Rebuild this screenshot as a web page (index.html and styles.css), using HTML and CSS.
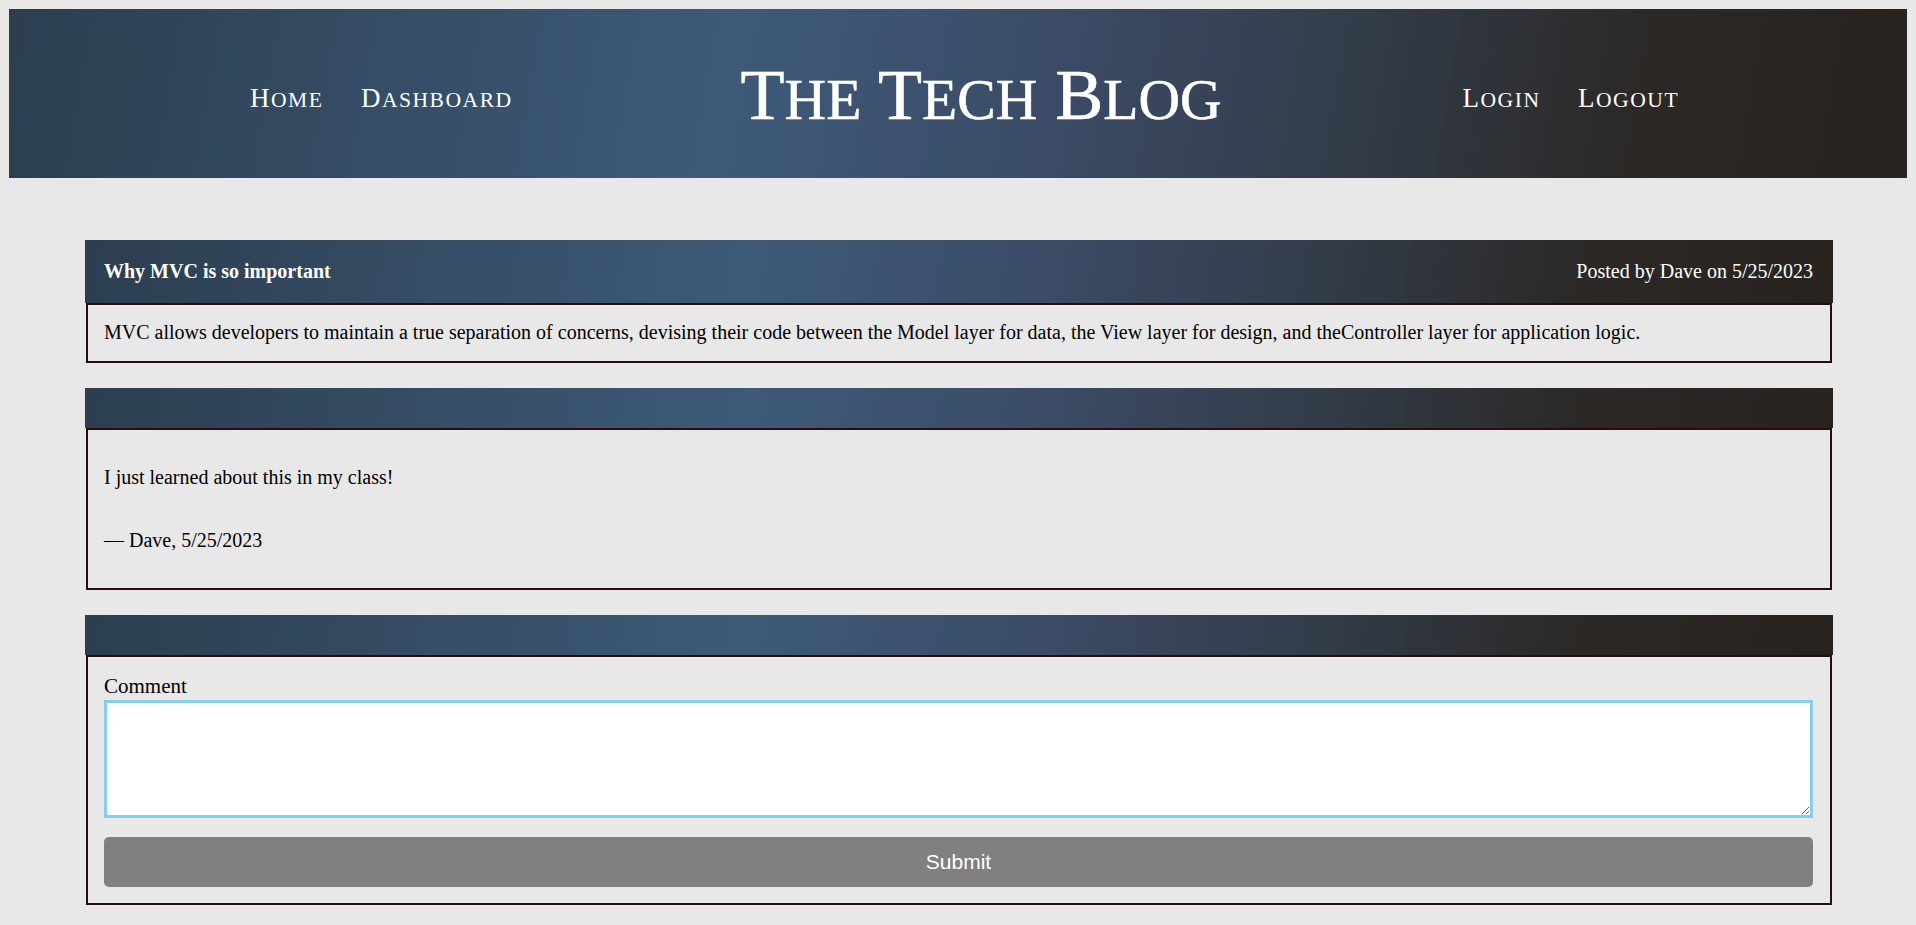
FILE: index.html
```html
<!DOCTYPE html>
<html lang="en">
<head>
<meta charset="utf-8">
<title>The Tech Blog</title>
<link rel="stylesheet" href="styles.css">
</head>
<body>
<header class="site-header">
  <nav class="nav nav-left">
    <a href="#" class="nav-link">H<span class="sc">ome</span></a>
    <a href="#" class="nav-link">D<span class="sc">ashboard</span></a>
  </nav>
  <h1 class="site-title">T<span class="sc">he</span> T<span class="sc">ech</span> B<span class="sc">log</span></h1>
  <nav class="nav nav-right">
    <a href="#" class="nav-link">L<span class="sc">ogin</span></a>
    <a href="#" class="nav-link">L<span class="sc">ogout</span></a>
  </nav>
</header>
<main class="content">
  <article class="card post">
    <div class="card-header post-header">
      <span class="post-title">Why MVC is so important</span>
      <span class="post-meta">Posted by Dave on 5/25/2023</span>
    </div>
    <div class="card-body post-body">
      <p>MVC allows developers to maintain a true separation of concerns, devising their code between the Model layer for data, the View layer for design, and theController layer for application logic.</p>
    </div>
  </article>
  <section class="card comment">
    <div class="card-header"></div>
    <div class="card-body comment-body">
      <p class="comment-text">I just learned about this in my class!</p>
      <p class="comment-meta">— Dave, 5/25/2023</p>
    </div>
  </section>
  <section class="card comment-form-card">
    <div class="card-header"></div>
    <form class="card-body comment-form">
      <label for="comment" class="comment-label">Comment</label>
      <textarea id="comment" class="comment-input"></textarea>
      <button type="submit" class="submit-btn">Submit</button>
    </form>
  </section>
</main>
</body>
</html>
```

FILE: styles.css
```css
* {
  box-sizing: border-box;
}

html,
body {
  margin: 0;
}

body {
  background: #e8e8e8;
  padding: 9px;
  font-family: "Liberation Serif", "Times New Roman", serif;
  color: #000;
}

.site-header,
.card-header {
  background: linear-gradient(100deg, #2c3e50 0%, #3d5a78 38%, #3b4b66 55%, #323a46 72%, #2b2825 86%, #29231f 100%);
}

.site-header {
  display: flex;
  align-items: center;
  justify-content: space-evenly;
  height: 169px;
  padding-top: 4px;
  color: #fff;
}

.nav {
  display: flex;
  gap: 37.5px;
  padding: 5px 0 0 13px;
  font-size: 27px;
  letter-spacing: 1.5px;
}

.nav-link {
  color: #fff;
  text-decoration: none;
}

.sc {
  font-size: 0.8em;
  text-transform: uppercase;
}

.site-title {
  margin: 0;
  font-size: 72px;
  font-weight: normal;
  color: #fff;
  -webkit-text-stroke: 0.6px #fff;
}

.content {
  display: flex;
  flex-direction: column;
  gap: 25px;
  margin-top: 62px;
  padding: 0 74px 0 76px;
}

.card-header {
  min-height: 40px;
  color: #fff;
}

.post-header {
  display: flex;
  justify-content: space-between;
  align-items: center;
  padding: 20px 20px 20px 19px;
  font-size: 20px;
}

.post-title {
  font-weight: bold;
}

.card-body {
  margin: 0 1px;
  border: 2px solid #2b0c0c;
}

.card-body p {
  margin: 0;
}

.post-body {
  padding: 16px 17px 17px 16px;
  font-size: 20px;
}

.comment-body {
  padding: 36px 16px;
  font-size: 20px;
}

.card-body .comment-meta {
  margin-top: 40px;
}

.comment-form {
  display: flex;
  flex-direction: column;
  padding: 17px 17px 16px 16px;
}

.comment-label {
  font-size: 21px;
  margin-bottom: 1px;
}

.comment-input {
  display: block;
  width: 100%;
  height: 118px;
  border: 3px solid #87ceeb;
  background: #fff;
  outline: none;
}

.submit-btn {
  margin-top: 19px;
  height: 50px;
  border: none;
  border-radius: 5px;
  background: #808080;
  color: #fff;
  font-family: "Liberation Sans", Arial, sans-serif;
  font-size: 21px;
}
```
